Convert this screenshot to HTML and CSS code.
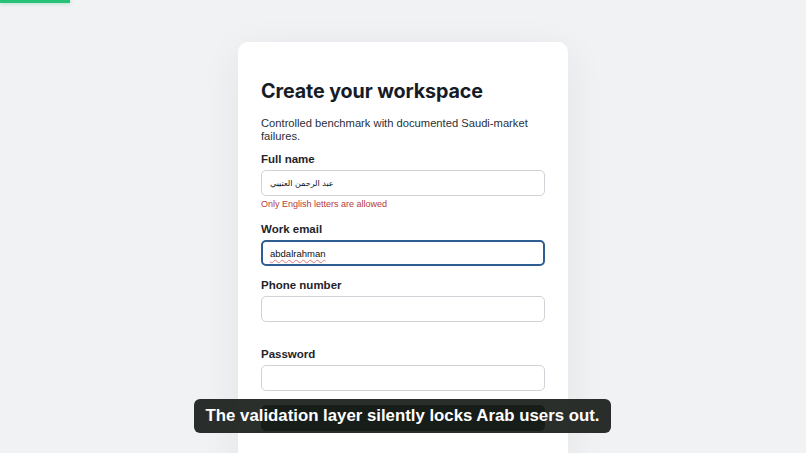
FILE: index.html
```html
<!DOCTYPE html>
<html lang="en">
<head>
  <meta charset="UTF-8">
  <meta name="viewport" content="width=device-width, initial-scale=1.0">
  <title>Create your workspace</title>
  <link rel="stylesheet" href="styles.css">
</head>
<body>

  <div class="progress"></div>

  <div class="page">
    <form class="card">
      <h1 class="title">Create your workspace</h1>
      <p class="subtitle">Controlled benchmark with documented Saudi-market failures.</p>

      <div class="field">
        <label class="label">Full name</label>
        <div class="input rtl-value">عبد الرحمن العتيبي</div>
        <div class="error">Only English letters are allowed</div>
      </div>

      <div class="field">
        <label class="label">Work email</label>
        <div class="input focused"><span class="spell">abdalrahman</span></div>
      </div>

      <div class="field field-loose">
        <label class="label">Phone number</label>
        <div class="input"></div>
      </div>

      <div class="field">
        <label class="label">Password</label>
        <div class="input"></div>
      </div>

      <button class="submit" type="button" aria-label="Create workspace"></button>
    </form>
  </div>

  <div class="caption">The validation layer silently locks Arab users out.</div>

</body>
</html>
```

FILE: styles.css
```css
body {
  font-family: "Liberation Sans", Arial, sans-serif;
  margin: 0;
  padding: 0;
  background-color: #f1f2f4;
  height: 453px;
  overflow: hidden;
  position: relative;
}
.progress {
  position: absolute;
  top: 0;
  left: 0;
  width: 70px;
  height: 3px;
  background-color: #27c178;
  box-shadow: 0 0 4px rgba(39, 193, 120, 0.5);
}
.page {
  display: flex;
  justify-content: center;
  padding-top: 42px;
}
.card {
  width: 330px;
  box-sizing: border-box;
  padding: 36px 23px 30px;
  background-color: #fff;
  border-radius: 10px;
  box-shadow: 0 10px 40px rgba(30, 40, 60, 0.07);
  display: flex;
  flex-direction: column;
}
.title {
  margin: 0;
  font-family: Inter, "Noto Sans", sans-serif;
  font-size: 19.7px;
  font-weight: 700;
  color: #161c26;
  letter-spacing: -0.1px;
  line-height: 26px;
}
.subtitle {
  margin: 13px 0 0;
  font-size: 11.2px;
  line-height: 12.5px;
  color: #2a2f36;
}
.field {
  display: flex;
  flex-direction: column;
  margin-top: 10px;
}
.field + .field {
  margin-top: 12px;
}
.field-loose {
  margin-bottom: 13px;
}
.label {
  font-size: 11.5px;
  font-weight: 700;
  color: #1f242b;
  line-height: 14px;
  margin-bottom: 4px;
}
.input {
  height: 26px;
  box-sizing: border-box;
  border: 1px solid #cfd2d6;
  border-radius: 5px;
  display: flex;
  align-items: center;
  padding: 0 8px;
  font-size: 9.5px;
  color: #111;
}
.rtl-value {
  font-family: "DejaVu Sans", sans-serif;
  font-size: 8px;
}
.focused {
  border: 2px solid #2e5d91;
  padding: 0 7px;
}
.spell {
  text-decoration: underline wavy #e07a7a;
  text-decoration-thickness: 1px;
  text-underline-offset: 2px;
}
.error {
  margin-top: 3px;
  font-size: 9px;
  line-height: 11px;
  color: #b23b3b;
}
.submit {
  margin-top: 14px;
  height: 26px;
  border: none;
  border-radius: 5px;
  background-color: #0f1a14;
}
.caption {
  position: absolute;
  left: 194px;
  top: 399px;
  width: 417px;
  height: 34px;
  box-sizing: border-box;
  border-radius: 6px;
  background-color: rgba(24, 29, 26, 0.92);
  color: #fff;
  font-weight: 700;
  font-size: 16.8px;
  display: flex;
  align-items: center;
  justify-content: center;
}
```
